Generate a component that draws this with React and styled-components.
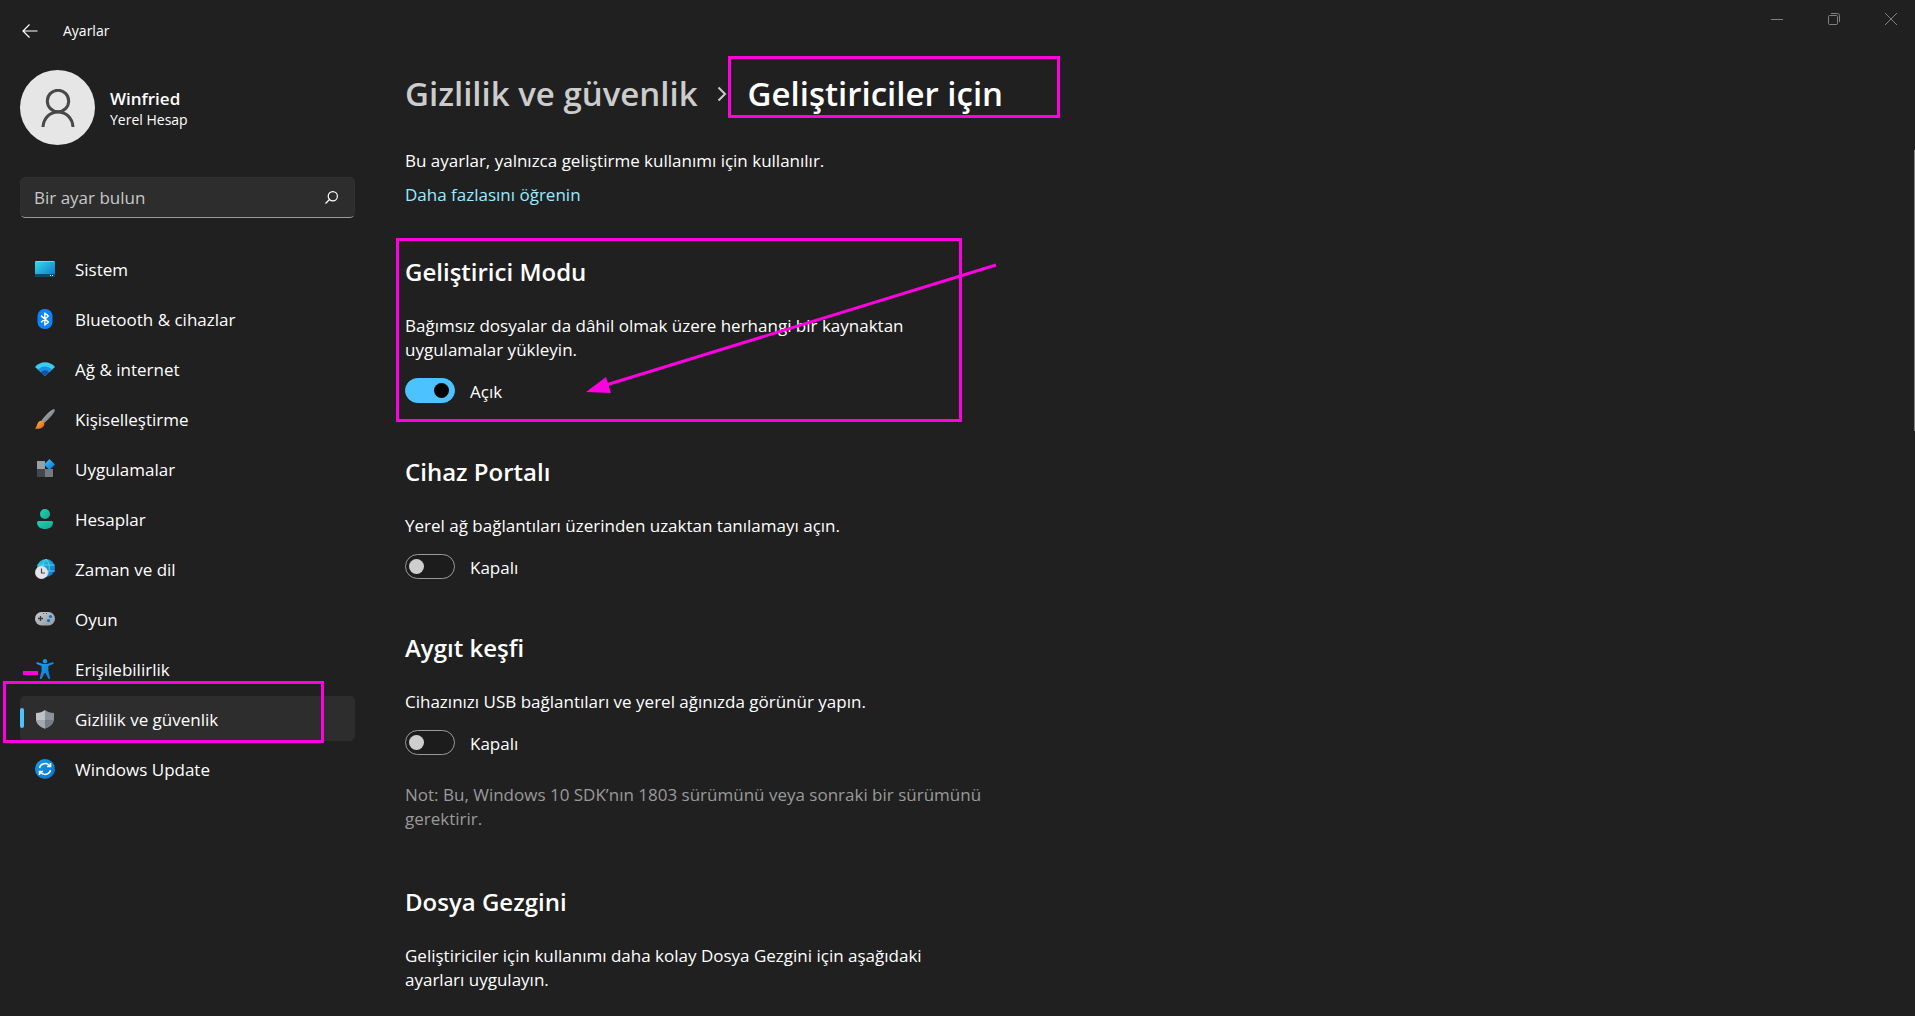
import React, { useState } from "react";
import styled, { createGlobalStyle } from "styled-components";

const GlobalStyle = createGlobalStyle`
  * { box-sizing: border-box; }
  body {
    margin: 0;
    background: #202020;
    color: #fff;
    font-family: "Open Sans", "Noto Sans", sans-serif;
    font-size: 17px;
    line-height: 24px;
  }
  button, input { font: inherit; color: inherit; }
  h1, h2, p { margin: 0; }
`;

const Window = styled.div`
  position: relative;
  height: 100vh;
  overflow: hidden;
  display: flex;
  flex-direction: column;
`;

const TitleBar = styled.header`
  display: flex;
  justify-content: space-between;
  align-items: flex-start;
  height: 50px;
  flex: none;
`;

const TitleGroup = styled.div`
  display: flex;
  align-items: center;
  gap: 23px;
  padding: 19px 0 0 20px;
  font-size: 14px;
  line-height: 22px;
`;

const IconButton = styled.button`
  display: grid;
  place-items: center;
  width: ${(p) => p.$width}px;
  height: ${(p) => p.$height}px;
  padding: 0;
  border: 0;
  background: none;
  color: ${(p) => p.$color || "#fff"};
`;

const WindowControls = styled.div`
  display: flex;
  gap: 9px;
`;

const Body = styled.div`
  flex: 1;
  min-height: 0;
  display: flex;
`;

const Sidebar = styled.aside`
  flex: none;
  width: 355px;
  padding: 20px 0 0 20px;
`;

const Account = styled.div`
  display: flex;
  align-items: center;
  gap: 15px;
  height: 75px;
`;

const Avatar = styled.div`
  display: grid;
  place-items: center;
  width: 75px;
  height: 75px;
  border-radius: 50%;
  background: #e6e6e6;
`;

const AccountText = styled.div`
  padding-top: 2px;
`;

const AccountName = styled.div`
  font-size: 17px;
  font-weight: 600;
  line-height: 22px;
`;

const AccountType = styled.div`
  font-size: 14px;
  line-height: 20px;
`;

const SearchBox = styled.label`
  display: flex;
  align-items: center;
  height: 41px;
  margin: 32px 0 28px;
  padding: 0 16px 0 13px;
  border: 1px solid #303030;
  border-bottom-color: #9a9a9a;
  border-radius: 5px;
  background: #2d2d2d;
`;

const SearchInput = styled.input`
  flex: 1;
  min-width: 0;
  padding: 0;
  border: 0;
  outline: 0;
  background: none;
  &::placeholder { color: #c8c8c8; opacity: 1; }
`;

const NavList = styled.nav`
  display: flex;
  flex-direction: column;
  gap: 5px;
`;

const NavLink = styled.a`
  position: relative;
  display: flex;
  align-items: center;
  gap: 20px;
  height: 45px;
  padding-left: 15px;
  border-radius: 5px;
  color: #fff;
  text-decoration: none;
  background: ${(p) => (p.$active ? "#2d2d2d" : "transparent")};
`;

const Label = styled.span`
  padding-top: 2px;
`;

const ActiveMark = styled.span`
  position: absolute;
  left: 0;
  top: 12px;
  width: 4px;
  height: 20px;
  border-radius: 2px;
  background: #4cc2ff;
`;

const Content = styled.main`
  flex: 1;
  min-width: 0;
  padding: 20px 40px 0 50px;
`;

const Breadcrumb = styled.h1`
  display: flex;
  align-items: center;
  font-size: 33px;
  font-weight: 600;
  line-height: 48px;
`;

const CrumbLink = styled.a`
  color: #cccccc;
  text-decoration: none;
`;

const CrumbArrow = styled.svg`
  flex: none;
  margin: 0 21px 0 19px;
`;

const Crumb = styled.span`
  position: relative;
`;

const Intro = styled.div`
  display: flex;
  flex-direction: column;
  gap: 10px;
  margin: 31px 0 48px;
`;

const MoreLink = styled.a`
  align-self: flex-start;
  color: #99ebff;
  text-decoration: none;
`;

const Section = styled.section`
  position: relative;
  max-width: 580px;
  margin-bottom: 52px;
`;

const SectionTitle = styled.h2`
  margin-bottom: 25px;
  font-size: 24px;
  font-weight: 600;
  line-height: 34px;
`;

const SwitchRow = styled.label`
  display: flex;
  align-items: center;
  gap: 15px;
  width: fit-content;
  height: 25px;
  margin-top: 16px;
`;

const SwitchInput = styled.input`
  appearance: none;
  display: flex;
  align-items: center;
  width: 50px;
  height: 25px;
  margin: 0;
  padding: 0 5px 0 3px;
  border: 1px solid #9a9a9a;
  border-radius: 13px;
  background: #1c1c1c;
  &::before {
    content: "";
    width: 15px;
    height: 15px;
    border-radius: 50%;
    background: #cecece;
  }
  &:checked {
    justify-content: flex-end;
    border-color: #4cc2ff;
    background: #4cc2ff;
  }
  &:checked::before { background: #000; }
`;

const Note = styled.p`
  padding: 28px 0 2px;
  color: #9a9a9a;
`;

const Highlight = styled.span`
  position: absolute;
  top: ${(p) => p.$top}px;
  left: ${(p) => p.$left}px;
  width: ${(p) => p.$width}px;
  height: ${(p) => p.$height}px;
  border: 3px solid #ff00e1;
  pointer-events: none;
`;

const Dash = styled.span`
  position: absolute;
  left: 3px;
  top: 25px;
  width: 15px;
  height: 4px;
  background: #ff00e1;
`;

const Arrow = styled.svg`
  position: absolute;
  left: 181px;
  top: 7px;
  pointer-events: none;
`;

const ScrollThumb = styled.div`
  position: absolute;
  right: 0;
  top: 150px;
  width: 1px;
  height: 281px;
  background: #848484;
`;

const Svg = ({ children }) => (
  <svg width="20" height="20" viewBox="0 0 20 20" aria-hidden="true">{children}</svg>
);

const Grad = ({ id, from, to }) => (
  <linearGradient id={id} x1="0" y1="0" x2="1" y2="1">
    <stop offset="0" stopColor={from} />
    <stop offset="1" stopColor={to} />
  </linearGradient>
);

const icons = {
  system: (
    <Svg>
      <Grad id="sys" from="#37dbee" to="#0c74c8" />
      <rect y="2" width="20" height="16" rx="1" fill="url(#sys)" />
      <path d="M0 15h20v2a1 1 0 0 1-1 1H1a1 1 0 0 1-1-1z" fill="#0d4a66" />
      <path d="M1 2.5h18" stroke="#7ff0f5" strokeWidth="0.7" />
      <path d="M15 16h1v1h-1zM17 16h1v1h-1z" fill="#d5f4fb" />
    </Svg>
  ),
  bluetooth: (
    <Svg>
      <rect x="2.5" width="15" height="20" rx="7" fill="#0a84ff" />
      <path d="M6 6.6l7.4 6.5L9.8 16V4l3.6 3L6 13.4" fill="none" stroke="#fff" strokeWidth="1.4" strokeLinejoin="round" />
    </Svg>
  ),
  network: (
    <Svg>
      <path d="M0 8C5.5 1.8 14.5 1.8 20 8L10 17z" fill="#3ccbf4" />
      <path d="M3 10.7C7 6.4 13 6.4 17 10.7L10 17z" fill="#1a90e0" />
      <path d="M6 13.4C8.3 10.6 11.7 10.6 14 13.4L10 17z" fill="#0d54a6" />
    </Svg>
  ),
  brush: (
    <Svg>
      <Grad id="handle" from="#b4b9bf" to="#6b7178" />
      <Grad id="bristle" from="#ffc02e" to="#e4571b" />
      <path d="M6.5 11.5C10 7 14.5 2 18.3.3c1.2-.4 1.9.6 1.4 1.6C18 5.7 12.8 11 9 14z" fill="url(#handle)" />
      <path d="M5.8 11.8c2.2-.2 4 1.5 3.5 3.7C8.7 18.8 4.5 20.5 0 19.5 2.5 18 1.8 12.3 5.8 11.8z" fill="url(#bristle)" />
    </Svg>
  ),
  apps: (
    <Svg>
      <Grad id="gem" from="#3bc9f7" to="#0a6fd6" />
      <rect x="2" y="2" width="8" height="8" fill="#9a9fa6" />
      <rect x="2" y="10" width="8" height="8" fill="#43474c" />
      <rect x="10" y="10" width="8" height="8" fill="#757a81" />
      <path d="M14.5 0l5.5 5.5-5.5 5.5L9 5.5z" fill="url(#gem)" />
    </Svg>
  ),
  accounts: (
    <Svg>
      <Grad id="acc" from="#25d0b4" to="#16a58d" />
      <circle cx="10" cy="5" r="5" fill="url(#acc)" />
      <path d="M3.5 12h13A1.5 1.5 0 0 1 18 13.5C18 18 14 20 10 20S2 18 2 13.5A1.5 1.5 0 0 1 3.5 12z" fill="url(#acc)" />
    </Svg>
  ),
  time: (
    <Svg>
      <Grad id="globe" from="#2fd0de" to="#0a66c8" />
      <circle cx="11" cy="9" r="9" fill="url(#globe)" />
      <path d="M2.5 6h17M3 12h17M11 0C6.5 5 6.5 13 11 18c4.5-5 4.5-13 0-18" fill="none" stroke="#5fdcf4" strokeWidth="0.8" />
      <circle cx="6.5" cy="13.5" r="6.5" fill="#e4e4e6" />
      <path d="M6.5 9.5v4.500h3.5" fill="none" stroke="#44474b" strokeWidth="1.2" />
    </Svg>
  ),
  gaming: (
    <Svg>
      <Grad id="pad" from="#c9cdd2" to="#90969c" />
      <rect y="3" width="20" height="13.5" rx="6.5" fill="url(#pad)" />
      <path d="M5.5 7v5M3 9.5h5" stroke="#3a3d40" strokeWidth="1.3" />
      <circle cx="15.5" cy="7.5" r="1.6" fill="#0b6fc9" />
      <circle cx="13.5" cy="11.5" r="1.6" fill="#0b6fc9" />
      <path d="M8 4h1v1H8zM11 4h1v1h-1z" fill="#55595d" />
    </Svg>
  ),
  access: (
    <Svg>
      <Grad id="man" from="#1fa3ea" to="#0873cf" />
      <circle cx="10" cy="2.2" r="2.2" fill="#1996e4" />
      <path d="M2.4 3.200L8 5h4l5.6-1.8c1-.2 1.4 1.2.5 1.7L13.4 7v5l1.8 7.2c0 1-1.5 1.2-2 .3L10.5 14h-1L6.8 19.5c-.5.9-2 .7-2-.3L6.6 12V7L1.9 4.900c-.9-.5-.5-1.9.5-1.7z" fill="url(#man)" />
    </Svg>
  ),
  privacy: (
    <Svg>
      <path d="M10 1C12.5 3 15.5 3.8 19 4v5.500c0 5-4 8.500-9 10z" fill="#8d9298" />
      <path d="M10 1C7.5 3 4.5 3.8 1 4v5.500c0 5 4 8.500 9 10z" fill="#bfc3c8" />
      <path d="M10 11h8.800c-.8 4.200-4.300 7.200-8.800 8.500z" fill="#777c82" />
      <path d="M10 11H1.200c.8 4.200 4.300 7.200 8.800 8.500z" fill="#a3a8ae" />
    </Svg>
  ),
  update: (
    <Svg>
      <Grad id="upd" from="#1a9fe8" to="#0670d0" />
      <circle cx="10" cy="10" r="10" fill="url(#upd)" />
      <path d="M4.5 9C5.5 4 12 3 15 7.2M15.5 4v3.600H12M15.5 11c-1 5-7.5 6-10.5 1.8M4.5 16v-3.600H8" fill="none" stroke="#fff" strokeWidth="1.5" />
    </Svg>
  ),
};

const navItems = [
  { label: "Sistem", icon: "system" },
  { label: "Bluetooth & cihazlar", icon: "bluetooth" },
  { label: "Ağ & internet", icon: "network" },
  { label: "Kişiselleştirme", icon: "brush" },
  { label: "Uygulamalar", icon: "apps" },
  { label: "Hesaplar", icon: "accounts" },
  { label: "Zaman ve dil", icon: "time" },
  { label: "Oyun", icon: "gaming" },
  { label: "Erişilebilirlik", icon: "access", dash: true },
  { label: "Gizlilik ve güvenlik", icon: "privacy", active: true },
  { label: "Windows Update", icon: "update" },
];

function Switch({ defaultOn }) {
  const [on, setOn] = useState(Boolean(defaultOn));
  return (
    <SwitchRow>
      <SwitchInput type="checkbox" role="switch" checked={on} onChange={() => setOn(!on)} />
      <Label>{on ? "Açık" : "Kapalı"}</Label>
    </SwitchRow>
  );
}

export default function App() {
  return (
    <Window>
      <GlobalStyle />
      <TitleBar>
        <TitleGroup>
          <IconButton $width={20} $height={24} aria-label="Geri">
            <svg width="16" height="14" viewBox="0 0 16 14" fill="none" stroke="currentColor" strokeWidth="1.2">
              <path d="M7.5 .5L1 7l6.5 6.5M1 7h14.5" />
            </svg>
          </IconButton>
          <span>Ayarlar</span>
        </TitleGroup>
        <WindowControls>
          <IconButton $width={48} $height={38} $color="#808080" aria-label="Simge durumuna küçült">
            <svg width="12" height="12" fill="none" stroke="currentColor"><path d="M0 6.5h12" /></svg>
          </IconButton>
          <IconButton $width={48} $height={38} $color="#808080" aria-label="Önceki boyut">
            <svg width="12" height="12" fill="none" stroke="currentColor">
              <rect x=".5" y="2.5" width="9" height="9" rx="1" />
              <path d="M3 .5h6.500a2 2 0 0 1 2 2V9" />
            </svg>
          </IconButton>
          <IconButton $width={48} $height={38} $color="#808080" aria-label="Kapat">
            <svg width="12" height="12" fill="none" stroke="currentColor"><path d="M0 0l12 12M12 0L0 12" /></svg>
          </IconButton>
        </WindowControls>
      </TitleBar>

      <Body>
        <Sidebar>
          <Account>
            <Avatar>
              <svg width="34" height="38" viewBox="0 0 34 38" fill="none" stroke="#484848" strokeWidth="3">
                <circle cx="17" cy="12" r="10.7" />
                <path d="M2 38C2.5 29 9 23 17 23s14.5 6 15 15" />
              </svg>
            </Avatar>
            <AccountText>
              <AccountName>Winfried</AccountName>
              <AccountType>Yerel Hesap</AccountType>
            </AccountText>
          </Account>
          <SearchBox>
            <SearchInput type="text" placeholder="Bir ayar bulun" aria-label="Bir ayar bulun" />
            <svg width="13" height="13" viewBox="0 0 13 13" fill="none" stroke="#fff" strokeWidth="1.2">
              <circle cx="7.8" cy="5.2" r="4.6" />
              <path d="M4.5 8.5L.5 12.5" />
            </svg>
          </SearchBox>
          <NavList>
            {navItems.map((item) => (
              <NavLink key={item.label} href="#" $active={item.active} aria-current={item.active ? "page" : undefined}>
                {item.active && <ActiveMark />}
                {icons[item.icon]}
                <Label>{item.label}</Label>
                {item.dash && <Dash />}
                {item.active && <Highlight $top={-15} $left={-17} $width={321} $height={62} />}
              </NavLink>
            ))}
          </NavList>
        </Sidebar>

        <Content>
          <Breadcrumb>
            <CrumbLink href="#">Gizlilik ve güvenlik</CrumbLink>
            <CrumbArrow width="10" height="16" viewBox="0 0 10 16" fill="none" stroke="#ccc" strokeWidth="2">
              <path d="M1.5 1.5L8 8l-6.5 6.5" />
            </CrumbArrow>
            <Crumb>
              Geliştiriciler için
              <Highlight $top={-14} $left={-20} $width={332} $height={62} />
            </Crumb>
          </Breadcrumb>
          <Intro>
            <p>Bu ayarlar, yalnızca geliştirme kullanımı için kullanılır.</p>
            <MoreLink href="#">Daha fazlasını öğrenin</MoreLink>
          </Intro>

          <Section>
            <SectionTitle>Geliştirici Modu</SectionTitle>
            <p>Bağımsız dosyalar da dâhil olmak üzere herhangi bir kaynaktan uygulamalar yükleyin.</p>
            <Switch defaultOn />
            <Highlight $top={-17} $left={-9} $width={566} $height={184} />
            <Arrow width="412" height="132" viewBox="0 0 412 132">
              <path d="M410 3L20 123" stroke="#ff00e1" strokeWidth="3" />
              <path d="M0 130l20-15 5 16z" fill="#ff00e1" />
            </Arrow>
          </Section>

          <Section>
            <SectionTitle>Cihaz Portalı</SectionTitle>
            <p>Yerel ağ bağlantıları üzerinden uzaktan tanılamayı açın.</p>
            <Switch />
          </Section>

          <Section>
            <SectionTitle>Aygıt keşfi</SectionTitle>
            <p>Cihazınızı USB bağlantıları ve yerel ağınızda görünür yapın.</p>
            <Switch />
            <Note>Not: Bu, Windows 10 SDK’nın 1803 sürümünü veya sonraki bir sürümünü gerektirir.</Note>
          </Section>

          <Section>
            <SectionTitle>Dosya Gezgini</SectionTitle>
            <p>Geliştiriciler için kullanımı daha kolay Dosya Gezgini için aşağıdaki ayarları uygulayın.</p>
          </Section>
        </Content>
      </Body>
      <ScrollThumb />
    </Window>
  );
}
